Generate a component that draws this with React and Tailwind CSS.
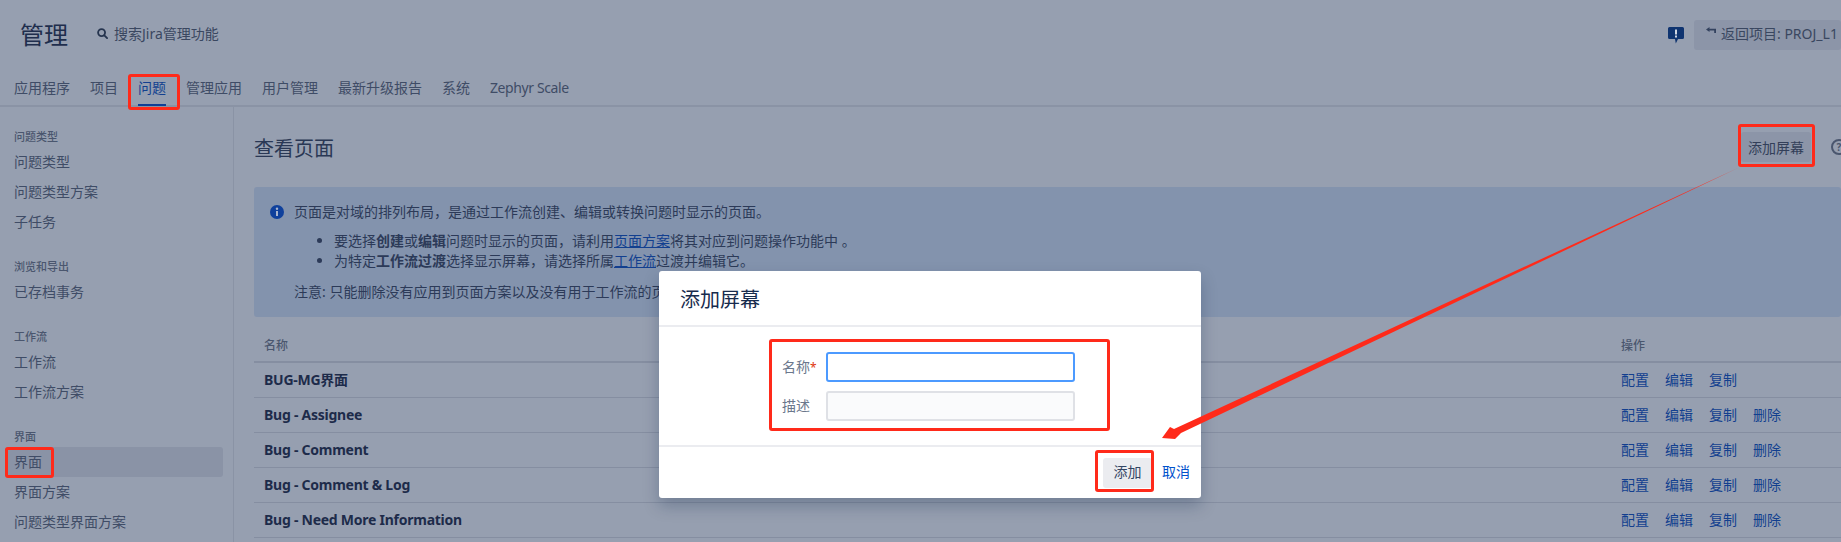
import React from "react";

const font = { fontFamily: '"Noto Sans", "Noto Sans CJK SC", sans-serif' };

const tabs = ["应用程序", "项目", "问题", "管理应用", "用户管理", "最新升级报告", "系统", "Zephyr Scale"];
const sections = [
  ["问题类型", ["问题类型", "问题类型方案", "子任务"]],
  ["浏览和导出", ["已存档事务"]],
  ["工作流", ["工作流", "工作流方案"]],
  ["界面", ["界面", "界面方案", "问题类型界面方案"]],
];
const rows = [
  ["BUG-MG界面", false],
  ["Bug - Assignee", true],
  ["Bug - Comment", true],
  ["Bug - Comment & Log", true],
  ["Bug - Need More Information", true],
];

function Mark({ className }) {
  return <div className={"absolute border-[3px] border-[#ff2a1a] rounded-[3px] " + className} />;
}

export default function App() {
  return (
    <div style={font} className="relative w-[1841px] h-[542px] overflow-hidden bg-[#969fb0] text-[14px] text-[#2c3a58]">
      {/* Header */}
      <div className="flex items-center h-[70px] pl-[20px]">
        <div className="text-[24px] leading-[30px] text-[#1f2e4d] w-[77px]">管理</div>
        <div className="flex items-center gap-[6px] text-[#3a4760] pb-[3px]">
          <svg width="11" height="11" viewBox="0 0 12 12" fill="none" stroke="#26354f" strokeWidth="2">
            <circle cx="5" cy="5" r="3.8" />
            <path d="M8 8l3 3" strokeLinecap="round" />
          </svg>
          <span>搜索Jira管理功能</span>
        </div>
        <div className="ml-auto flex items-center">
          <svg width="16" height="17" viewBox="0 0 16 17" className="mr-[10px]">
            <path d="M1.5 0h13A1.5 1.5 0 0 1 16 1.5v9a1.5 1.5 0 0 1-1.5 1.5H10l-2.2 4.5L7 12H1.5A1.5 1.5 0 0 1 0 10.500v-9A1.500 1.500 0 0 1 1.500 0z" fill="#0f3470" />
            <rect x="7" y="2.500" width="2" height="5" fill="#fff" opacity=".8" />
            <rect x="7" y="8.500" width="2" height="2" fill="#fff" opacity=".8" />
          </svg>
          <div className="flex items-center h-[30px] w-[147px] pl-[12px] pb-[3px] bg-[#8c95a8] rounded-[3px] text-[#3a4760] whitespace-nowrap">
            <svg width="10" height="7" viewBox="0 0 10 7" className="mr-[5px] mb-[6px]" fill="#33425f">
              <path d="M0 2.500 3.500 0v1.700H10v1.800H3.500V5z" />
              <rect x="8.200" y="2" width="1.800" height="4" />
            </svg>
            <span>返回项目: PROJ_L1</span>
          </div>
        </div>
      </div>

      {/* Tabs */}
      <div className="flex gap-[20px] h-[37px] pl-[14px] border-b-2 border-[#8a93a5] whitespace-nowrap">
        {tabs.map((t) => (
          <div
            key={t}
            className={
              "h-[36px] flex items-center pt-[1px] border-b-2 " +
              (t === "问题" ? "border-[#0f3f97] text-[#123f8f]" : "border-transparent text-[#3f4c66]") +
              (t === "Zephyr Scale" ? " tracking-[-0.4px]" : "")
            }
          >
            {t}
          </div>
        ))}
      </div>

      <div className="flex">
        {/* Sidebar */}
        <div className="w-[234px] h-[435px] shrink-0 border-r border-[#8a93a5] pl-[5px] pr-[10px] pt-[20px] flex flex-col gap-[20px]">
          {sections.map(([label, items]) => (
            <div key={label}>
              <div className="h-[20px] pl-[9px] flex items-center text-[11px] font-medium text-[#4a566e]">{label}</div>
              {items.map((it, i) => (
                <div
                  key={it}
                  className={
                    "h-[30px] pl-[9px] pb-[2px] flex items-center rounded-[3px] text-[#3f4c66] " +
                    (label === "界面" && i === 0 ? "bg-[#8a93a6]" : "")
                  }
                >
                  {it}
                </div>
              ))}
            </div>
          ))}
        </div>

        {/* Main */}
        <div className="flex-1 min-w-0 pl-[20px]">
          <div className="flex items-center h-[80px]">
            <div className="text-[20px] text-[#2a3855] pt-[3px]">查看页面</div>
            <div className="ml-auto flex items-center">
              <div className="h-[30px] px-[7px] w-[70px] flex items-center justify-center bg-[#8c95a8] rounded-[3px] text-[#333f59] whitespace-nowrap">
                添加屏幕
              </div>
              <div className="ml-[20px] -mr-[6px] w-[16px] h-[16px] rounded-full border-2 border-[#4a566e] text-[10px] font-bold leading-none flex items-center justify-center text-[#4a566e] shrink-0">
                ?
              </div>
            </div>
          </div>

          <div className="h-[130px] bg-[#8393ad] rounded-[3px] pt-[15px] pl-[16px] flex gap-[10px]">
            <svg width="14" height="14" viewBox="0 0 14 14" className="mt-[3px] shrink-0">
              <circle cx="7" cy="7" r="7" fill="#0f409c" />
              <circle cx="7" cy="3.800" r="1.200" fill="#a9b5ce" />
              <rect x="6" y="6" width="2" height="5" fill="#a9b5ce" />
            </svg>
            <div className="leading-[20px]">
              <div>页面是对域的排列布局，是通过工作流创建、编辑或转换问题时显示的页面。</div>
              <ul className="list-disc pl-[40px] mt-[9px]">
                <li>
                  要选择<b className="font-semibold">创建</b>或<b className="font-semibold">编辑</b>问题时显示的页面，请利用
                  <span className="underline text-[#123f8f]">页面方案</span>将其对应到问题操作功能中 。
                </li>
                <li>
                  为特定<b className="font-semibold">工作流过渡</b>选择显示屏幕，请选择所属
                  <span className="underline text-[#123f8f]">工作流</span>过渡并编辑它。
                </li>
              </ul>
              <div className="mt-[11px]">注意: 只能删除没有应用到页面方案以及没有用于工作流的页面。</div>
            </div>
          </div>

          <div className="grid grid-cols-[1367px_1fr] items-center h-[46px] pt-[14px] border-b-2 border-[#858ea1] text-[12px] font-medium text-[#4a566e]">
            <div className="pl-[10px]">名称</div>
            <div>操作</div>
          </div>
          {rows.map(([name, del]) => (
            <div key={name} className="grid grid-cols-[1367px_1fr] items-center h-[35px] pb-[2px] border-b border-[#858ea1]">
              <div className="pl-[10px] font-bold tracking-[-0.25px] text-[#1d2b4a]">{name}</div>
              <div className="flex gap-[16px] text-[#123f8f]">
                <span>配置</span>
                <span>编辑</span>
                <span>复制</span>
                {del && <span>删除</span>}
              </div>
            </div>
          ))}
        </div>
      </div>

      {/* Modal */}
      <div className="absolute left-[659px] top-[271px] w-[542px] h-[227px] bg-white rounded-[3px] shadow-[0_8px_16px_rgba(9,30,66,0.25)] flex flex-col">
        <div className="h-[56px] shrink-0 pl-[21px] pt-[4px] flex items-center text-[20px] text-[#172b4d] border-b-2 border-[#ebecf0]">添加屏幕</div>
        <div className="h-[120px] shrink-0 pt-[25px] border-b-2 border-[#ebecf0] flex flex-col gap-[9px] pl-[123px]">
          <div className="flex items-center h-[30px]">
            <div className="w-[44px] pb-[2px] text-[#6b778c]">名称<span className="text-[#de350b] text-[12px]">*</span></div>
            <div className="w-[249px] h-[30px] bg-white border-2 border-[#4c9aff] rounded-[3px]" />
          </div>
          <div className="flex items-center h-[30px]">
            <div className="w-[44px] pb-[2px] text-[#6b778c]">描述</div>
            <div className="w-[249px] h-[30px] bg-[#fafbfc] border-2 border-[#dfe1e6] rounded-[3px]" />
          </div>
        </div>
        <div className="flex-1 flex items-center justify-end pr-[11px] gap-[10px]">
          <div className="w-[49px] h-[30px] pb-[2px] bg-[#ebecf0] rounded-[3px] flex items-center justify-center text-[#344563]">添加</div>
          <div className="text-[#0052cc] pb-[2px]">取消</div>
        </div>
      </div>

      {/* Annotations */}
      <Mark className="left-[128px] top-[74px] w-[52px] h-[36px]" />
      <Mark className="left-[5px] top-[447px] w-[49px] h-[31px]" />
      <Mark className="left-[1738px] top-[124px] w-[77px] h-[43px]" />
      <Mark className="left-[769px] top-[339px] w-[341px] h-[92px]" />
      <Mark className="left-[1095px] top-[450px] w-[59px] h-[42px]" />
      <svg className="absolute left-0 top-0 pointer-events-none" width="1841" height="542">
        <polygon points="1162,438 1170,427 1174,429 1738,168 1181,433 1175,439" fill="#ff2a1a" />
      </svg>
    </div>
  );
}
